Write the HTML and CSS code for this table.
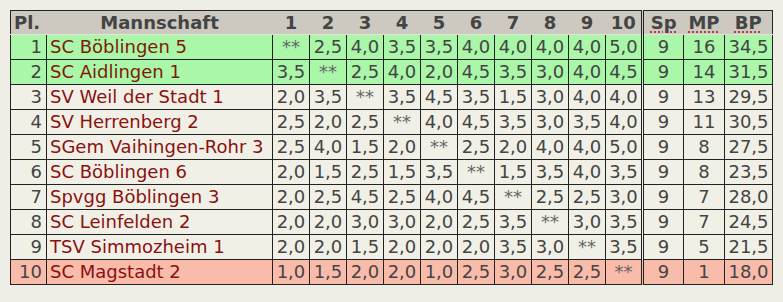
FILE: index.html
```html
<!DOCTYPE html>
<html lang="de">
<head>
<meta charset="utf-8">
<link rel="stylesheet" href="styles.css">
</head>
<body>
<table class="tab">
<thead>
<tr>
<th class="pl w-pl">Pl.</th><th class="name w-name">Mannschaft</th>
<th class="w-s">1</th><th class="w-s">2</th><th class="w-s">3</th><th class="w-s">4</th><th class="w-s">5</th><th class="w-s">6</th><th class="w-s">7</th><th class="w-s">8</th><th class="w-s">9</th><th class="w-s">10</th>
<th class="sep w-sp"><abbr title="Spiele">Sp</abbr></th><th class="w-mp"><abbr title="Mannschaftspunkte">MP</abbr></th><th class="w-bp"><abbr title="Brettpunkte">BP</abbr></th>
</tr>
</thead>
<tbody>
<tr class="up"><td class="pl">1</td><td class="name">SC Böblingen 5</td><td class="x">**</td><td>2,5</td><td>4,0</td><td>3,5</td><td>3,5</td><td>4,0</td><td>4,0</td><td>4,0</td><td>4,0</td><td>5,0</td><td class="sep">9</td><td>16</td><td>34,5</td></tr>
<tr class="up"><td class="pl">2</td><td class="name">SC Aidlingen 1</td><td>3,5</td><td class="x">**</td><td>2,5</td><td>4,0</td><td>2,0</td><td>4,5</td><td>3,5</td><td>3,0</td><td>4,0</td><td>4,5</td><td class="sep">9</td><td>14</td><td>31,5</td></tr>
<tr><td class="pl">3</td><td class="name">SV Weil der Stadt 1</td><td>2,0</td><td>3,5</td><td class="x">**</td><td>3,5</td><td>4,5</td><td>3,5</td><td>1,5</td><td>3,0</td><td>4,0</td><td>4,0</td><td class="sep">9</td><td>13</td><td>29,5</td></tr>
<tr><td class="pl">4</td><td class="name">SV Herrenberg 2</td><td>2,5</td><td>2,0</td><td>2,5</td><td class="x">**</td><td>4,0</td><td>4,5</td><td>3,5</td><td>3,0</td><td>3,5</td><td>4,0</td><td class="sep">9</td><td>11</td><td>30,5</td></tr>
<tr><td class="pl">5</td><td class="name">SGem Vaihingen-Rohr 3</td><td>2,5</td><td>4,0</td><td>1,5</td><td>2,0</td><td class="x">**</td><td>2,5</td><td>2,0</td><td>4,0</td><td>4,0</td><td>5,0</td><td class="sep">9</td><td>8</td><td>27,5</td></tr>
<tr><td class="pl">6</td><td class="name">SC Böblingen 6</td><td>2,0</td><td>1,5</td><td>2,5</td><td>1,5</td><td>3,5</td><td class="x">**</td><td>1,5</td><td>3,5</td><td>4,0</td><td>3,5</td><td class="sep">9</td><td>8</td><td>23,5</td></tr>
<tr><td class="pl">7</td><td class="name">Spvgg Böblingen 3</td><td>2,0</td><td>2,5</td><td>4,5</td><td>2,5</td><td>4,0</td><td>4,5</td><td class="x">**</td><td>2,5</td><td>2,5</td><td>3,0</td><td class="sep">9</td><td>7</td><td>28,0</td></tr>
<tr><td class="pl">8</td><td class="name">SC Leinfelden 2</td><td>2,0</td><td>2,0</td><td>3,0</td><td>3,0</td><td>2,0</td><td>2,5</td><td>3,5</td><td class="x">**</td><td>3,0</td><td>3,5</td><td class="sep">9</td><td>7</td><td>24,5</td></tr>
<tr><td class="pl">9</td><td class="name">TSV Simmozheim 1</td><td>2,0</td><td>2,0</td><td>1,5</td><td>2,0</td><td>2,0</td><td>2,0</td><td>3,5</td><td>3,0</td><td class="x">**</td><td>3,5</td><td class="sep">9</td><td>5</td><td>21,5</td></tr>
<tr class="down"><td class="pl">10</td><td class="name">SC Magstadt 2</td><td>1,0</td><td>1,5</td><td>2,0</td><td>2,0</td><td>1,0</td><td>2,5</td><td>3,0</td><td>2,5</td><td>2,5</td><td class="x">**</td><td class="sep">9</td><td>1</td><td>18,0</td></tr>
</tbody>
</table>
</body>
</html>
```

FILE: styles.css
```css
html, body {
  margin: 0;
  background: #efeee6;
}
body {
  padding: 10px;
  font-family: "DejaVu Sans", Verdana, sans-serif;
  font-size: 18px;
  color: #444;
}
.tab {
  border-collapse: collapse;
  border: 1px solid #222;
}
th, td {
  box-sizing: border-box;
}
.w-pl { width: 36px; min-width: 36px; }
.w-name { width: 226px; min-width: 226px; }
.w-s { width: 37px; min-width: 37px; }
.w-sp { width: 41px; min-width: 41px; }
.w-mp { width: 41px; min-width: 41px; }
.w-bp { width: 48px; min-width: 48px; }
th {
  background: #cdc9c1;
  color: #444;
  font-weight: bold;
  height: 24px;
  padding: 0;
  text-align: center;
  border-bottom: 1px solid #e4e2da;
  line-height: 22px;
}
th.pl { text-align: left; padding-left: 3px; }
abbr {
  text-decoration: underline dotted #b03030;
  text-underline-offset: 3px;
}
td {
  height: 25px;
  padding: 0;
  border: 1px solid #222;
  text-align: center;
  background: #f1f0e7;
  line-height: 22px;
  white-space: nowrap;
}
td.pl { text-align: right; padding-right: 4px; }
td.name {
  text-align: left;
  padding-left: 3px;
  color: #8a1010;
}
td.x { color: #666; }
.sep { border-left: 3px double #222; }
.up td { background: #aaf7aa; }
.up td.name { color: #7f1a08; }
.down td { background: #f9bcaa; }
```
